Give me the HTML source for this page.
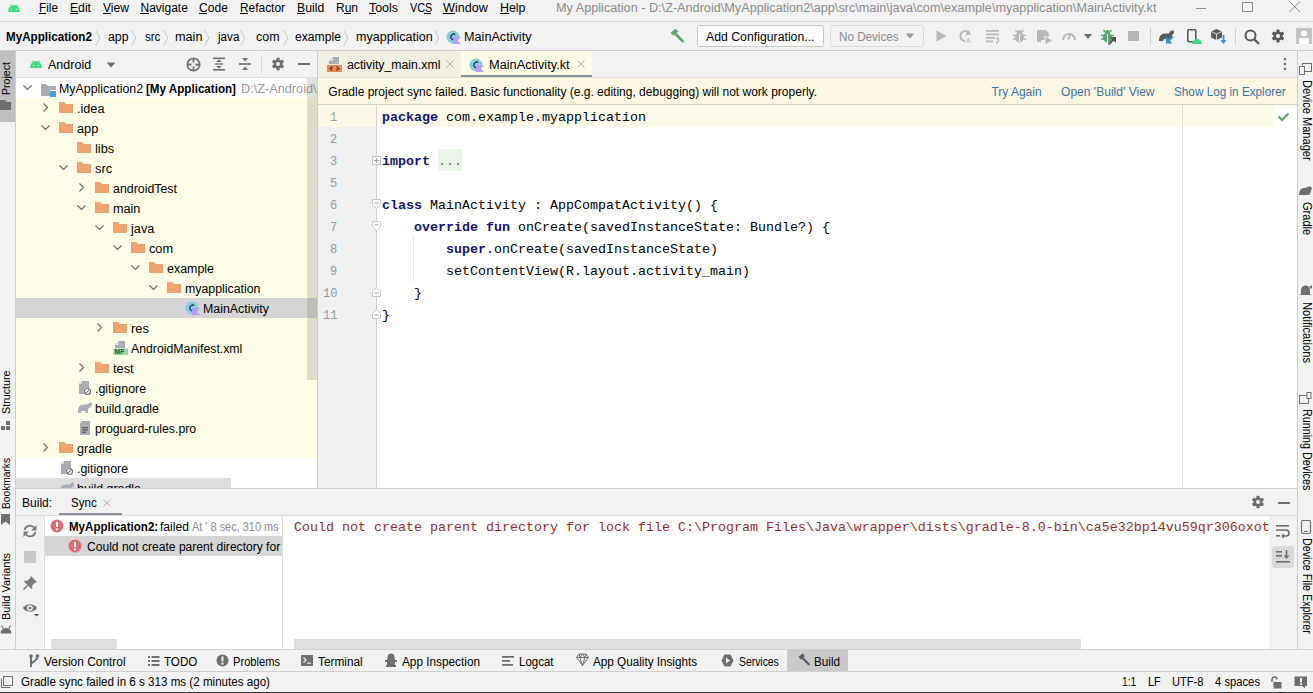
<!DOCTYPE html>
<html><head><meta charset="utf-8"><style>
html,body{margin:0;padding:0;}
body{width:1313px;height:693px;overflow:hidden;position:relative;background:#f2f2f2;}
body div,body svg{position:absolute;}
.t{white-space:pre;}
</style></head><body>
<div style="left:0px;top:0px;width:1313px;height:693px;background:#f2f2f2;"></div>
<div style="left:0px;top:21px;width:1313px;height:1px;background:#dadada;"></div>
<div style="left:0px;top:50px;width:1313px;height:1px;background:#cfcfcf;"></div>
<div style="left:15px;top:51px;width:1px;height:598px;background:#cdcdcd;"></div>
<div style="left:0px;top:51px;width:15px;height:71px;background:#bfbfbf;"></div>
<div style="left:16px;top:77px;width:301px;height:1px;background:#e2e2e2;"></div>
<div style="left:16px;top:78px;width:301px;height:410px;background:#ffffff;"></div>
<div style="left:16px;top:98px;width:301px;height:360px;background:#fefde6;"></div>
<div style="left:16px;top:298px;width:301px;height:20px;background:#d5d5d5;"></div>
<div style="left:16px;top:478px;width:215px;height:10px;background:#dedede;"></div>
<div style="left:317px;top:51px;width:1px;height:437px;background:#cdcdcd;"></div>
<div style="left:1297px;top:51px;width:1px;height:598px;background:#cdcdcd;"></div>
<div style="left:318px;top:51px;width:143px;height:26px;background:#f0efe1;"></div>
<div style="left:461px;top:51px;width:131px;height:26px;background:#fefde6;"></div>
<div style="left:461px;top:75px;width:131px;height:3px;background:#8c929c;"></div>
<div style="left:318px;top:77px;width:979px;height:1px;background:#e2e2e2;"></div>
<div style="left:318px;top:78px;width:979px;height:26px;background:#fef8e3;"></div>
<div style="left:318px;top:104px;width:979px;height:1px;background:#d6d3c4;"></div>
<div style="left:318px;top:105px;width:979px;height:383px;background:#ffffff;"></div>
<div style="left:318px;top:105px;width:58px;height:383px;background:#f0f0f0;"></div>
<div style="left:376px;top:105px;width:1px;height:383px;background:#d2d2d2;"></div>
<div style="left:318px;top:105px;width:58px;height:22px;background:#fdf9e7;"></div>
<div style="left:377px;top:105px;width:896px;height:22px;background:#fefae8;"></div>
<div style="left:1182px;top:105px;width:1px;height:383px;background:#e0e0e0;"></div>
<div style="left:16px;top:488px;width:1281px;height:1px;background:#d1d1d1;"></div>
<div style="left:16px;top:489px;width:1281px;height:27px;background:#f2f2f2;"></div>
<div style="left:59px;top:513px;width:63px;height:2.5px;background:#8c929c;"></div>
<div style="left:16px;top:515px;width:1281px;height:1px;background:#dcdcdc;"></div>
<div style="left:16px;top:516px;width:28px;height:133px;background:#f2f2f2;"></div>
<div style="left:44px;top:516px;width:1px;height:133px;background:#dcdcdc;"></div>
<div style="left:45px;top:516px;width:237px;height:133px;background:#ffffff;"></div>
<div style="left:45px;top:536px;width:237px;height:20px;background:#d5d5d5;"></div>
<div style="left:51px;top:639px;width:66px;height:10px;background:#dfdfdf;"></div>
<div style="left:282px;top:516px;width:1px;height:133px;background:#dcdcdc;"></div>
<div style="left:283px;top:516px;width:986px;height:133px;background:#ffffff;"></div>
<div style="left:294px;top:639px;width:787px;height:10px;background:#dfdfdf;"></div>
<div style="left:1269px;top:516px;width:28px;height:133px;background:#f2f2f2;"></div>
<div style="left:1272px;top:546px;width:22px;height:22px;background:#d9d9d9;border-radius:3px;"></div>
<div style="left:0px;top:649px;width:1313px;height:1px;background:#d0d0d0;"></div>
<div style="left:787px;top:650px;width:61px;height:21px;background:#c9c9c9;"></div>
<div style="left:0px;top:671px;width:1313px;height:1px;background:#d0d0d0;"></div>
<div style="left:0px;top:692px;width:1313px;height:1px;background:#3a3a3a;"></div>
<div class="t" style="left:39px;top:1.84px;font-size:12px;line-height:12px;font-family:'Liberation Sans', sans-serif;font-weight:400;color:#000;transform:scaleX(0.9822);transform-origin:0 0;">File</div>
<div style="left:39px;top:13px;width:7px;height:1px;background:#000;"></div>
<div class="t" style="left:70px;top:1.84px;font-size:12px;line-height:12px;font-family:'Liberation Sans', sans-serif;font-weight:400;color:#000;transform:scaleX(1.0151);transform-origin:0 0;">Edit</div>
<div style="left:70px;top:13px;width:8px;height:1px;background:#000;"></div>
<div class="t" style="left:103px;top:1.84px;font-size:12px;line-height:12px;font-family:'Liberation Sans', sans-serif;font-weight:400;color:#000;transform:scaleX(1.0079);transform-origin:0 0;">View</div>
<div style="left:103px;top:13px;width:8px;height:1px;background:#000;"></div>
<div class="t" style="left:140.5px;top:1.84px;font-size:12px;line-height:12px;font-family:'Liberation Sans', sans-serif;font-weight:400;color:#000;">Navigate</div>
<div style="left:140px;top:13px;width:9px;height:1px;background:#000;"></div>
<div class="t" style="left:199px;top:1.84px;font-size:12px;line-height:12px;font-family:'Liberation Sans', sans-serif;font-weight:400;color:#000;transform:scaleX(1.0109);transform-origin:0 0;">Code</div>
<div style="left:199px;top:13px;width:8px;height:1px;background:#000;"></div>
<div class="t" style="left:240px;top:1.84px;font-size:12px;line-height:12px;font-family:'Liberation Sans', sans-serif;font-weight:400;color:#000;transform:scaleX(0.9921);transform-origin:0 0;">Refactor</div>
<div style="left:240px;top:13px;width:8px;height:1px;background:#000;"></div>
<div class="t" style="left:297.3px;top:1.84px;font-size:12px;line-height:12px;font-family:'Liberation Sans', sans-serif;font-weight:400;color:#000;transform:scaleX(1.0192);transform-origin:0 0;">Build</div>
<div style="left:297px;top:13px;width:8px;height:1px;background:#000;"></div>
<div class="t" style="left:336px;top:1.84px;font-size:12px;line-height:12px;font-family:'Liberation Sans', sans-serif;font-weight:400;color:#000;">Run</div>
<div style="left:344px;top:13px;width:7px;height:1px;background:#000;"></div>
<div class="t" style="left:369px;top:1.84px;font-size:12px;line-height:12px;font-family:'Liberation Sans', sans-serif;font-weight:400;color:#000;transform:scaleX(1.0351);transform-origin:0 0;">Tools</div>
<div style="left:369px;top:13px;width:7px;height:1px;background:#000;"></div>
<div class="t" style="left:409.6px;top:1.84px;font-size:12px;line-height:12px;font-family:'Liberation Sans', sans-serif;font-weight:400;color:#000;transform:scaleX(0.9073);transform-origin:0 0;">VCS</div>
<div style="left:424px;top:13px;width:7px;height:1px;background:#000;"></div>
<div class="t" style="left:443px;top:1.84px;font-size:12px;line-height:12px;font-family:'Liberation Sans', sans-serif;font-weight:400;color:#000;transform:scaleX(1.0495);transform-origin:0 0;">Window</div>
<div style="left:443px;top:13px;width:12px;height:1px;background:#000;"></div>
<div class="t" style="left:500px;top:1.84px;font-size:12px;line-height:12px;font-family:'Liberation Sans', sans-serif;font-weight:400;color:#000;transform:scaleX(1.0329);transform-origin:0 0;">Help</div>
<div style="left:500px;top:13px;width:9px;height:1px;background:#000;"></div>
<div class="t" style="left:555.6px;top:1.84px;font-size:12px;line-height:12px;font-family:'Liberation Sans', sans-serif;font-weight:400;color:#8c8c8c;transform:scaleX(1.0558);transform-origin:0 0;">My Application - D:\Z-Android\MyApplication2\app\src\main\java\com\example\myapplication\MainActivity.kt</div>
<div class="t" style="left:6.4px;top:30.84px;font-size:12px;line-height:12px;font-family:'Liberation Sans', sans-serif;font-weight:700;color:#000;transform:scaleX(0.9686);transform-origin:0 0;">MyApplication2</div>
<div class="t" style="left:108px;top:30.84px;font-size:12px;line-height:12px;font-family:'Liberation Sans', sans-serif;font-weight:400;color:#000;transform:scaleX(1.0234);transform-origin:0 0;">app</div>
<div class="t" style="left:144.6px;top:30.84px;font-size:12px;line-height:12px;font-family:'Liberation Sans', sans-serif;font-weight:400;color:#000;transform:scaleX(0.9625);transform-origin:0 0;">src</div>
<div class="t" style="left:175px;top:30.84px;font-size:12px;line-height:12px;font-family:'Liberation Sans', sans-serif;font-weight:400;color:#000;transform:scaleX(1.0571);transform-origin:0 0;">main</div>
<div class="t" style="left:217.5px;top:30.84px;font-size:12px;line-height:12px;font-family:'Liberation Sans', sans-serif;font-weight:400;color:#000;transform:scaleX(0.9766);transform-origin:0 0;">java</div>
<div class="t" style="left:255.5px;top:30.84px;font-size:12px;line-height:12px;font-family:'Liberation Sans', sans-serif;font-weight:400;color:#000;transform:scaleX(1.0365);transform-origin:0 0;">com</div>
<div class="t" style="left:295px;top:30.84px;font-size:12px;line-height:12px;font-family:'Liberation Sans', sans-serif;font-weight:400;color:#000;transform:scaleX(1.0141);transform-origin:0 0;">example</div>
<div class="t" style="left:356px;top:30.84px;font-size:12px;line-height:12px;font-family:'Liberation Sans', sans-serif;font-weight:400;color:#000;transform:scaleX(1.0440);transform-origin:0 0;">myapplication</div>
<div class="t" style="left:464px;top:30.84px;font-size:12px;line-height:12px;font-family:'Liberation Sans', sans-serif;font-weight:400;color:#000;transform:scaleX(1.0544);transform-origin:0 0;">MainActivity</div>
<div class="t" style="left:48.2px;top:58.84px;font-size:12px;line-height:12px;font-family:'Liberation Sans', sans-serif;font-weight:400;color:#000;transform:scaleX(1.0441);transform-origin:0 0;">Android</div>
<div style="left:16px;top:78px;width:301px;height:410px;overflow:hidden;">
<svg style="left:6.0px;top:4.0px;" width="11" height="11" viewBox="0 0 11 11"><path d="M1.5 3.5 L5.5 7.5 L9.5 3.5" fill="none" stroke="#6e6e6e" stroke-width="1.2"/></svg>
<svg style="left:25px;top:4px;" width="17" height="16" viewBox="0 0 17 16"><path d="M0 2 H5 L7 4 H15 V8 H9 V14 H0 Z" fill="#a8adb3"/><rect x="9" y="9" width="6" height="6" fill="#3ea4dc"/></svg>
<div class="t" style="left:42.9px;top:4.84px;font-size:12px;line-height:12px;font-family:'Liberation Sans', sans-serif;font-weight:400;color:#000;transform:scaleX(1.0335);transform-origin:0 0;">MyApplication2</div>
<div class="t" style="left:130px;top:4.84px;font-size:12px;line-height:12px;font-family:'Liberation Sans', sans-serif;font-weight:700;color:#000;transform:scaleX(0.9689);transform-origin:0 0;">[My Application]</div>
<div class="t" style="left:225.2px;top:4.84px;font-size:12px;line-height:12px;font-family:'Liberation Sans', sans-serif;font-weight:400;color:#999999;transform:scaleX(1.0594);transform-origin:0 0;">D:\Z-Android\MyApplication2</div>
<svg style="left:24.0px;top:24.0px;" width="11" height="11" viewBox="0 0 11 11"><path d="M3.5 1.5 L7.5 5.5 L3.5 9.5" fill="none" stroke="#6e6e6e" stroke-width="1.2"/></svg>
<svg style="left:41.900000000000006px;top:22px;" width="16" height="16" viewBox="0 0 16 16"><path d="M1 2 H6 L8 4 H15 V13 H1 Z" fill="#f0a36e"/></svg>
<div class="t" style="left:60.900000000000006px;top:24.84px;font-size:12px;line-height:12px;font-family:'Liberation Sans', sans-serif;font-weight:400;color:#000;transform:scaleX(1.0534);transform-origin:0 0;">.idea</div>
<svg style="left:24.0px;top:44.0px;" width="11" height="11" viewBox="0 0 11 11"><path d="M1.5 3.5 L5.5 7.5 L9.5 3.5" fill="none" stroke="#6e6e6e" stroke-width="1.2"/></svg>
<svg style="left:41.900000000000006px;top:42px;" width="16" height="16" viewBox="0 0 16 16"><path d="M1 2 H6 L8 4 H15 V13 H1 Z" fill="#f0a36e"/></svg>
<div class="t" style="left:60.900000000000006px;top:44.84px;font-size:12px;line-height:12px;font-family:'Liberation Sans', sans-serif;font-weight:400;color:#000;transform:scaleX(1.0649);transform-origin:0 0;">app</div>
<svg style="left:59.900000000000006px;top:62px;" width="16" height="16" viewBox="0 0 16 16"><path d="M1 2 H6 L8 4 H15 V13 H1 Z" fill="#f0a36e"/></svg>
<div class="t" style="left:78.9px;top:64.84px;font-size:12px;line-height:12px;font-family:'Liberation Sans', sans-serif;font-weight:400;color:#000;transform:scaleX(1.0705);transform-origin:0 0;">libs</div>
<svg style="left:42.0px;top:84.0px;" width="11" height="11" viewBox="0 0 11 11"><path d="M1.5 3.5 L5.5 7.5 L9.5 3.5" fill="none" stroke="#6e6e6e" stroke-width="1.2"/></svg>
<svg style="left:59.900000000000006px;top:82px;" width="16" height="16" viewBox="0 0 16 16"><path d="M1 2 H6 L8 4 H15 V13 H1 Z" fill="#f0a36e"/></svg>
<div class="t" style="left:78.9px;top:84.84px;font-size:12px;line-height:12px;font-family:'Liberation Sans', sans-serif;font-weight:400;color:#000;transform:scaleX(1.0775);transform-origin:0 0;">src</div>
<svg style="left:60.0px;top:104.0px;" width="11" height="11" viewBox="0 0 11 11"><path d="M3.5 1.5 L7.5 5.5 L3.5 9.5" fill="none" stroke="#6e6e6e" stroke-width="1.2"/></svg>
<svg style="left:77.9px;top:102px;" width="16" height="16" viewBox="0 0 16 16"><path d="M1 2 H6 L8 4 H15 V13 H1 Z" fill="#f0a36e"/></svg>
<div class="t" style="left:96.9px;top:104.84px;font-size:12px;line-height:12px;font-family:'Liberation Sans', sans-serif;font-weight:400;color:#000;transform:scaleX(1.0311);transform-origin:0 0;">androidTest</div>
<svg style="left:60.0px;top:124.0px;" width="11" height="11" viewBox="0 0 11 11"><path d="M1.5 3.5 L5.5 7.5 L9.5 3.5" fill="none" stroke="#6e6e6e" stroke-width="1.2"/></svg>
<svg style="left:77.9px;top:122px;" width="16" height="16" viewBox="0 0 16 16"><path d="M1 2 H6 L8 4 H15 V13 H1 Z" fill="#f0a36e"/></svg>
<div class="t" style="left:96.9px;top:124.84px;font-size:12px;line-height:12px;font-family:'Liberation Sans', sans-serif;font-weight:400;color:#000;transform:scaleX(1.0534);transform-origin:0 0;">main</div>
<svg style="left:78.0px;top:144.0px;" width="11" height="11" viewBox="0 0 11 11"><path d="M1.5 3.5 L5.5 7.5 L9.5 3.5" fill="none" stroke="#6e6e6e" stroke-width="1.2"/></svg>
<svg style="left:95.9px;top:142px;" width="16" height="16" viewBox="0 0 16 16"><path d="M1 2 H6 L8 4 H15 V13 H1 Z" fill="#f0a36e"/></svg>
<div class="t" style="left:114.9px;top:144.84px;font-size:12px;line-height:12px;font-family:'Liberation Sans', sans-serif;font-weight:400;color:#000;transform:scaleX(1.0604);transform-origin:0 0;">java</div>
<svg style="left:96.0px;top:164.0px;" width="11" height="11" viewBox="0 0 11 11"><path d="M1.5 3.5 L5.5 7.5 L9.5 3.5" fill="none" stroke="#6e6e6e" stroke-width="1.2"/></svg>
<svg style="left:113.9px;top:162px;" width="16" height="16" viewBox="0 0 16 16"><path d="M1 2 H6 L8 4 H15 V13 H1 Z" fill="#f0a36e"/></svg>
<div class="t" style="left:132.9px;top:164.84px;font-size:12px;line-height:12px;font-family:'Liberation Sans', sans-serif;font-weight:400;color:#000;transform:scaleX(1.0591);transform-origin:0 0;">com</div>
<svg style="left:114.0px;top:184.0px;" width="11" height="11" viewBox="0 0 11 11"><path d="M1.5 3.5 L5.5 7.5 L9.5 3.5" fill="none" stroke="#6e6e6e" stroke-width="1.2"/></svg>
<svg style="left:131.9px;top:182px;" width="16" height="16" viewBox="0 0 16 16"><path d="M1 2 H6 L8 4 H15 V13 H1 Z" fill="#f0a36e"/></svg>
<div class="t" style="left:150.9px;top:184.84px;font-size:12px;line-height:12px;font-family:'Liberation Sans', sans-serif;font-weight:400;color:#000;transform:scaleX(1.0370);transform-origin:0 0;">example</div>
<svg style="left:132.0px;top:204.0px;" width="11" height="11" viewBox="0 0 11 11"><path d="M1.5 3.5 L5.5 7.5 L9.5 3.5" fill="none" stroke="#6e6e6e" stroke-width="1.2"/></svg>
<svg style="left:149.9px;top:202px;" width="16" height="16" viewBox="0 0 16 16"><path d="M1 2 H6 L8 4 H15 V13 H1 Z" fill="#f0a36e"/></svg>
<div class="t" style="left:168.9px;top:204.84px;font-size:12px;line-height:12px;font-family:'Liberation Sans', sans-serif;font-weight:400;color:#000;transform:scaleX(1.0286);transform-origin:0 0;">myapplication</div>
<svg style="left:168.6px;top:222px;" width="16" height="16" viewBox="0 0 16 16"><circle cx="7" cy="8" r="6.5" fill="#86cde0"/><path d="M9.2 5.3 A3 3 0 1 0 9.2 10.7" fill="none" stroke="#234" stroke-width="1.3"/><path d="M7 8 H15 L11.5 11.5 L15 15 H7 Z" fill="#b99bf8"/></svg>
<div class="t" style="left:186.9px;top:224.84px;font-size:12px;line-height:12px;font-family:'Liberation Sans', sans-serif;font-weight:400;color:#000;transform:scaleX(1.0306);transform-origin:0 0;">MainActivity</div>
<svg style="left:78.0px;top:244.0px;" width="11" height="11" viewBox="0 0 11 11"><path d="M3.5 1.5 L7.5 5.5 L3.5 9.5" fill="none" stroke="#6e6e6e" stroke-width="1.2"/></svg>
<svg style="left:95.9px;top:242px;" width="16" height="16" viewBox="0 0 16 16"><path d="M1 2 H6 L8 4 H15 V13 H1 Z" fill="#f0a36e"/></svg>
<div class="t" style="left:114.9px;top:244.84px;font-size:12px;line-height:12px;font-family:'Liberation Sans', sans-serif;font-weight:400;color:#000;transform:scaleX(1.0750);transform-origin:0 0;">res</div>
<svg style="left:96.60000000000001px;top:262px;" width="16" height="16" viewBox="0 0 16 16"><path d="M6 1 H12 V8 H2 V5 Z" fill="#a8adb3"/><path d="M6 1 V5 H2 Z" fill="#d8dadd"/><rect x="0.5" y="8.5" width="14.5" height="6.5" fill="#8fdba8"/><text x="1.6" y="14.3" font-family="Liberation Sans" font-size="6.8" font-weight="700" fill="#1f5a30">MF</text></svg>
<div class="t" style="left:114.9px;top:264.84px;font-size:12px;line-height:12px;font-family:'Liberation Sans', sans-serif;font-weight:400;color:#000;transform:scaleX(1.0242);transform-origin:0 0;">AndroidManifest.xml</div>
<svg style="left:60.0px;top:284.0px;" width="11" height="11" viewBox="0 0 11 11"><path d="M3.5 1.5 L7.5 5.5 L3.5 9.5" fill="none" stroke="#6e6e6e" stroke-width="1.2"/></svg>
<svg style="left:77.9px;top:282px;" width="16" height="16" viewBox="0 0 16 16"><path d="M1 2 H6 L8 4 H15 V13 H1 Z" fill="#f0a36e"/></svg>
<div class="t" style="left:96.9px;top:284.84px;font-size:12px;line-height:12px;font-family:'Liberation Sans', sans-serif;font-weight:400;color:#000;transform:scaleX(1.0667);transform-origin:0 0;">test</div>
<svg style="left:60.60000000000001px;top:302px;" width="16" height="16" viewBox="0 0 16 16"><path d="M5 1 H12 V14 H2 V4 Z" fill="#a8adb3"/><path d="M5 1 V4 H2 Z" fill="#d8dadd"/><circle cx="10.5" cy="11.5" r="3.8" fill="#fff"/><circle cx="10.5" cy="11.5" r="3" fill="none" stroke="#6e6e6e" stroke-width="1.1"/><path d="M8.4 13.6 L12.6 9.4" stroke="#6e6e6e" stroke-width="1.1"/></svg>
<div class="t" style="left:78.9px;top:304.84px;font-size:12px;line-height:12px;font-family:'Liberation Sans', sans-serif;font-weight:400;color:#000;transform:scaleX(1.0353);transform-origin:0 0;">.gitignore</div>
<svg style="left:60.60000000000001px;top:322px;" width="17" height="16" viewBox="0 0 17 16"><path d="M1 13 L1.2 8.5 C1.8 5.8 4 4.6 7 4.6 L10 4.6 C11 4.4 11.8 3 13 2.5 C14.6 2 15.4 3.4 14.8 5 C14.2 6.8 12.6 8 11.2 8.6 L10.8 13 H8.8 L8.4 11 H4.6 L4 13 Z" fill="#a9aeb3"/></svg>
<div class="t" style="left:78.9px;top:324.84px;font-size:12px;line-height:12px;font-family:'Liberation Sans', sans-serif;font-weight:400;color:#000;transform:scaleX(1.0311);transform-origin:0 0;">build.gradle</div>
<svg style="left:60.60000000000001px;top:342px;" width="16" height="16" viewBox="0 0 16 16"><path d="M5 1 H13 V15 H3 V3 Z" fill="#a8adb3"/><path d="M5 1 V3 H3 Z" fill="#d8dadd"/><rect x="5" y="7" width="6" height="1.2" fill="#555"/><rect x="5" y="9.3" width="6" height="1.2" fill="#555"/><rect x="5" y="11.6" width="4" height="1.2" fill="#555"/></svg>
<div class="t" style="left:78.9px;top:344.84px;font-size:12px;line-height:12px;font-family:'Liberation Sans', sans-serif;font-weight:400;color:#000;transform:scaleX(1.0251);transform-origin:0 0;">proguard-rules.pro</div>
<svg style="left:24.0px;top:364.0px;" width="11" height="11" viewBox="0 0 11 11"><path d="M3.5 1.5 L7.5 5.5 L3.5 9.5" fill="none" stroke="#6e6e6e" stroke-width="1.2"/></svg>
<svg style="left:41.900000000000006px;top:362px;" width="16" height="16" viewBox="0 0 16 16"><path d="M1 2 H6 L8 4 H15 V13 H1 Z" fill="#f0a36e"/></svg>
<div class="t" style="left:60.900000000000006px;top:364.84px;font-size:12px;line-height:12px;font-family:'Liberation Sans', sans-serif;font-weight:400;color:#000;transform:scaleX(1.0450);transform-origin:0 0;">gradle</div>
<svg style="left:42.60000000000001px;top:382px;" width="16" height="16" viewBox="0 0 16 16"><path d="M5 1 H12 V14 H2 V4 Z" fill="#a8adb3"/><path d="M5 1 V4 H2 Z" fill="#d8dadd"/><circle cx="10.5" cy="11.5" r="3.8" fill="#fff"/><circle cx="10.5" cy="11.5" r="3" fill="none" stroke="#6e6e6e" stroke-width="1.1"/><path d="M8.4 13.6 L12.6 9.4" stroke="#6e6e6e" stroke-width="1.1"/></svg>
<div class="t" style="left:60.900000000000006px;top:384.84px;font-size:12px;line-height:12px;font-family:'Liberation Sans', sans-serif;font-weight:400;color:#000;transform:scaleX(1.0353);transform-origin:0 0;">.gitignore</div>
<svg style="left:42.60000000000001px;top:402px;" width="17" height="16" viewBox="0 0 17 16"><path d="M1 13 L1.2 8.5 C1.8 5.8 4 4.6 7 4.6 L10 4.6 C11 4.4 11.8 3 13 2.5 C14.6 2 15.4 3.4 14.8 5 C14.2 6.8 12.6 8 11.2 8.6 L10.8 13 H8.8 L8.4 11 H4.6 L4 13 Z" fill="#a9aeb3"/></svg>
<div class="t" style="left:60.900000000000006px;top:404.84px;font-size:12px;line-height:12px;font-family:'Liberation Sans', sans-serif;font-weight:400;color:#000;transform:scaleX(1.0311);transform-origin:0 0;">build.gradle</div>
</div>
<div style="left:307px;top:78px;width:10px;height:302px;background:rgba(120,120,100,0.24);"></div>
<svg style="left:327px;top:57px;" width="16" height="16" viewBox="0 0 16 16"><path d="M6 0 H12 V7 H2 V4 Z" fill="#a8adb3"/><path d="M6 0 V4 H2 Z" fill="#dcdee0"/><rect x="0" y="8" width="15" height="7" fill="#e8885a"/><path d="M5.5 9.5 L3.2 11.5 L5.5 13.5 M9.5 9.5 L11.8 11.5 L9.5 13.5" fill="none" stroke="#5a2e1e" stroke-width="1.1"/></svg>
<div class="t" style="left:346.6px;top:58.84px;font-size:12px;line-height:12px;font-family:'Liberation Sans', sans-serif;font-weight:400;color:#000;transform:scaleX(1.0223);transform-origin:0 0;">activity_main.xml</div>
<svg style="left:446px;top:60px;" width="8" height="8" viewBox="0 0 8 8"><path d="M0.5 0.5 L7.5 7.5 M7.5 0.5 L0.5 7.5" stroke="#b0b0b0" stroke-width="1"/></svg>
<svg style="left:469px;top:57px;" width="16" height="16" viewBox="0 0 16 16"><circle cx="7" cy="8" r="6.5" fill="#86cde0"/><path d="M9.2 5.3 A3 3 0 1 0 9.2 10.7" fill="none" stroke="#234" stroke-width="1.3"/><path d="M7 8 H15 L11.5 11.5 L15 15 H7 Z" fill="#b99bf8"/></svg>
<div class="t" style="left:489.4px;top:58.84px;font-size:12px;line-height:12px;font-family:'Liberation Sans', sans-serif;font-weight:400;color:#000;transform:scaleX(1.0634);transform-origin:0 0;">MainActivity.kt</div>
<svg style="left:577px;top:60px;" width="8" height="8" viewBox="0 0 8 8"><path d="M0.5 0.5 L7.5 7.5 M7.5 0.5 L0.5 7.5" stroke="#b0b0b0" stroke-width="1"/></svg>
<svg style="left:1282px;top:57px;" width="6" height="14" viewBox="0 0 6 14"><circle cx="3" cy="2" r="1.3" fill="#6e6e6e"/><circle cx="3" cy="7" r="1.3" fill="#6e6e6e"/><circle cx="3" cy="12" r="1.3" fill="#6e6e6e"/></svg>
<div class="t" style="left:328.3px;top:85.84px;font-size:12px;line-height:12px;font-family:'Liberation Sans', sans-serif;font-weight:400;color:#000;">Gradle project sync failed. Basic functionality (e.g. editing, debugging) will not work properly.</div>
<div class="t" style="left:991.4px;top:85.84px;font-size:12px;line-height:12px;font-family:'Liberation Sans', sans-serif;font-weight:400;color:#3d72a6;">Try Again</div>
<div class="t" style="left:1061.4px;top:85.84px;font-size:12px;line-height:12px;font-family:'Liberation Sans', sans-serif;font-weight:400;color:#3d72a6;transform:scaleX(1.0054);transform-origin:0 0;">Open 'Build' View</div>
<div class="t" style="left:1174px;top:85.84px;font-size:12px;line-height:12px;font-family:'Liberation Sans', sans-serif;font-weight:400;color:#3d72a6;transform:scaleX(0.9783);transform-origin:0 0;">Show Log in Explorer</div>
<div class="t" style="left:330px;top:111.80px;font-size:12px;line-height:12px;font-family:'Liberation Mono', monospace;font-weight:400;color:#999999;">1</div>
<div class="t" style="left:330px;top:133.80px;font-size:12px;line-height:12px;font-family:'Liberation Mono', monospace;font-weight:400;color:#999999;">2</div>
<div class="t" style="left:330px;top:155.80px;font-size:12px;line-height:12px;font-family:'Liberation Mono', monospace;font-weight:400;color:#999999;">3</div>
<div class="t" style="left:330px;top:177.80px;font-size:12px;line-height:12px;font-family:'Liberation Mono', monospace;font-weight:400;color:#999999;">5</div>
<div class="t" style="left:330px;top:199.80px;font-size:12px;line-height:12px;font-family:'Liberation Mono', monospace;font-weight:400;color:#999999;">6</div>
<div class="t" style="left:330px;top:221.80px;font-size:12px;line-height:12px;font-family:'Liberation Mono', monospace;font-weight:400;color:#999999;">7</div>
<div class="t" style="left:330px;top:243.80px;font-size:12px;line-height:12px;font-family:'Liberation Mono', monospace;font-weight:400;color:#999999;">8</div>
<div class="t" style="left:330px;top:265.80px;font-size:12px;line-height:12px;font-family:'Liberation Mono', monospace;font-weight:400;color:#999999;">9</div>
<div class="t" style="left:323px;top:287.80px;font-size:12px;line-height:12px;font-family:'Liberation Mono', monospace;font-weight:400;color:#999999;">10</div>
<div class="t" style="left:323px;top:309.80px;font-size:12px;line-height:12px;font-family:'Liberation Mono', monospace;font-weight:400;color:#999999;">11</div>
<div class="t" style="left:382px;top:110.78px;font-size:13.33px;line-height:13.33px;font-family:'Liberation Mono', monospace;font-weight:700;color:#14146e;">package</div>
<div class="t" style="left:438px;top:110.78px;font-size:13.33px;line-height:13.33px;font-family:'Liberation Mono', monospace;font-weight:400;color:#000;"> com.example.myapplication</div>
<div class="t" style="left:382px;top:154.78px;font-size:13.33px;line-height:13.33px;font-family:'Liberation Mono', monospace;font-weight:700;color:#14146e;">import</div>
<div class="t" style="left:430px;top:154.78px;font-size:13.33px;line-height:13.33px;font-family:'Liberation Mono', monospace;font-weight:400;color:#000;"> </div>
<div style="left:438px;top:149px;width:24px;height:22px;background:#e9f5e6;"></div>
<div class="t" style="left:438px;top:154.78px;font-size:13.33px;line-height:13.33px;font-family:'Liberation Mono', monospace;font-weight:400;color:#707070;">...</div>
<div class="t" style="left:382px;top:198.78px;font-size:13.33px;line-height:13.33px;font-family:'Liberation Mono', monospace;font-weight:700;color:#14146e;">class</div>
<div class="t" style="left:422px;top:198.78px;font-size:13.33px;line-height:13.33px;font-family:'Liberation Mono', monospace;font-weight:400;color:#000;"> MainActivity : AppCompatActivity() {</div>
<div class="t" style="left:414px;top:220.78px;font-size:13.33px;line-height:13.33px;font-family:'Liberation Mono', monospace;font-weight:700;color:#14146e;">override</div>
<div class="t" style="left:478px;top:220.78px;font-size:13.33px;line-height:13.33px;font-family:'Liberation Mono', monospace;font-weight:400;color:#000;"> </div>
<div class="t" style="left:486px;top:220.78px;font-size:13.33px;line-height:13.33px;font-family:'Liberation Mono', monospace;font-weight:700;color:#14146e;">fun</div>
<div class="t" style="left:510px;top:220.78px;font-size:13.33px;line-height:13.33px;font-family:'Liberation Mono', monospace;font-weight:400;color:#000;"> onCreate(savedInstanceState: Bundle?) {</div>
<div class="t" style="left:446px;top:242.78px;font-size:13.33px;line-height:13.33px;font-family:'Liberation Mono', monospace;font-weight:700;color:#14146e;">super</div>
<div class="t" style="left:486px;top:242.78px;font-size:13.33px;line-height:13.33px;font-family:'Liberation Mono', monospace;font-weight:400;color:#000;">.onCreate(savedInstanceState)</div>
<div class="t" style="left:446px;top:264.78px;font-size:13.33px;line-height:13.33px;font-family:'Liberation Mono', monospace;font-weight:400;color:#000;">setContentView(R.layout.activity_main)</div>
<div class="t" style="left:414px;top:286.78px;font-size:13.33px;line-height:13.33px;font-family:'Liberation Mono', monospace;font-weight:400;color:#000;">}</div>
<div class="t" style="left:382px;top:308.78px;font-size:13.33px;line-height:13.33px;font-family:'Liberation Mono', monospace;font-weight:400;color:#000;">}</div>
<div style="left:413px;top:237px;width:1px;height:44px;background:#e3e3e3;"></div>
<svg style="left:372px;top:155.5px;" width="9" height="9" viewBox="0 0 9 9"><rect x="0.5" y="0.5" width="8" height="8" fill="#fff" stroke="#c8c8c8"/><path d="M2 4.5 H7 M4.5 2 V7" stroke="#a0a0a0"/></svg>
<svg style="left:372px;top:199px;" width="9" height="10" viewBox="0 0 9 10"><path d="M0.5 0.5 H8.5 V5.5 L4.5 9.5 L0.5 5.5 Z" fill="#fff" stroke="#c8c8c8"/><path d="M2.5 4 H6.5" stroke="#a0a0a0"/></svg>
<svg style="left:372px;top:221px;" width="9" height="10" viewBox="0 0 9 10"><path d="M0.5 0.5 H8.5 V5.5 L4.5 9.5 L0.5 5.5 Z" fill="#fff" stroke="#c8c8c8"/><path d="M2.5 4 H6.5" stroke="#a0a0a0"/></svg>
<svg style="left:372px;top:287px;" width="9" height="10" viewBox="0 0 9 10"><path d="M0.5 9.5 H8.5 V4.5 L4.5 0.5 L0.5 4.5 Z" fill="#fff" stroke="#c8c8c8"/><path d="M2.5 6 H6.5" stroke="#a0a0a0"/></svg>
<svg style="left:372px;top:309px;" width="9" height="10" viewBox="0 0 9 10"><path d="M0.5 9.5 H8.5 V4.5 L4.5 0.5 L0.5 4.5 Z" fill="#fff" stroke="#c8c8c8"/><path d="M2.5 6 H6.5" stroke="#a0a0a0"/></svg>
<svg style="left:1277px;top:111px;" width="13" height="11" viewBox="0 0 13 11"><path d="M1.5 5.5 L5 9 L11.5 2.5" fill="none" stroke="#59a869" stroke-width="2.2"/></svg>
<div class="t" style="left:22.3px;top:496.84px;font-size:12px;line-height:12px;font-family:'Liberation Sans', sans-serif;font-weight:400;color:#000;transform:scaleX(1.0056);transform-origin:0 0;">Build:</div>
<div class="t" style="left:71px;top:496.84px;font-size:12px;line-height:12px;font-family:'Liberation Sans', sans-serif;font-weight:400;color:#000;transform:scaleX(0.9630);transform-origin:0 0;">Sync</div>
<svg style="left:103px;top:499px;" width="8" height="8" viewBox="0 0 8 8"><path d="M0.5 0.5 L7.5 7.5 M7.5 0.5 L0.5 7.5" stroke="#b0b0b0" stroke-width="1"/></svg>
<svg style="left:1248px;top:494px;" width="20" height="20" viewBox="0 0 20 20"><rect x="8.40" y="1.80" width="3.2" height="12.40" rx="0.6" fill="#6e6e6e" transform="rotate(0 10 8)"/><rect x="8.40" y="1.80" width="3.2" height="12.40" rx="0.6" fill="#6e6e6e" transform="rotate(60 10 8)"/><rect x="8.40" y="1.80" width="3.2" height="12.40" rx="0.6" fill="#6e6e6e" transform="rotate(120 10 8)"/><circle cx="10" cy="8" r="4.46" fill="#6e6e6e"/><circle cx="10" cy="8" r="2.05" fill="#f2f2f2"/></svg>
<div style="left:1278px;top:502px;width:12px;height:1.5px;background:#6e6e6e;"></div>
<svg style="left:22px;top:523px;" width="16" height="16" viewBox="0 0 16 16"><path d="M2.5 7 A5.5 5.5 0 0 1 12 4.5" fill="none" stroke="#7a7a7a" stroke-width="1.8"/><path d="M13.5 9 A5.5 5.5 0 0 1 4 11.5" fill="none" stroke="#7a7a7a" stroke-width="1.8"/><path d="M14.5 2 V7.5 H9 Z" fill="#7a7a7a"/><path d="M1.5 14 V8.5 H7 Z" fill="#7a7a7a"/></svg>
<div style="left:24px;top:551px;width:12px;height:12px;background:#c9c9c9;"></div>
<svg style="left:22px;top:575px;" width="16" height="16" viewBox="0 0 16 16"><path d="M9 1 L15 7 L12.5 8 L10 11 L10.5 13 L9.5 14 L2 6.5 L3 5.5 L5 6 L8 3.5 Z" fill="#7a7a7a"/><path d="M5.5 10.5 L1.5 14.5" stroke="#7a7a7a" stroke-width="1.6"/></svg>
<svg style="left:22px;top:601px;" width="18" height="16" viewBox="0 0 18 16"><path d="M1 7 C4 2 12 2 15 7 C12 12 4 12 1 7 Z" fill="#7a7a7a"/><circle cx="8" cy="7" r="2.8" fill="#fff"/><circle cx="8" cy="7" r="1.6" fill="#7a7a7a"/><path d="M12 13 H17 L14.5 15.5 Z" fill="#505050"/></svg>
<svg style="left:49.5px;top:519px;" width="14" height="14" viewBox="0 0 14 14"><circle cx="7" cy="7" r="6.5" fill="#e06c75"/><rect x="6" y="3" width="2" height="5" fill="#fff"/><rect x="6" y="9.3" width="2" height="2" fill="#fff"/></svg>
<div class="t" style="left:68.5px;top:520.84px;font-size:12px;line-height:12px;font-family:'Liberation Sans', sans-serif;font-weight:700;color:#000;transform:scaleX(0.9625);transform-origin:0 0;">MyApplication2:</div>
<div class="t" style="left:160px;top:520.84px;font-size:12px;line-height:12px;font-family:'Liberation Sans', sans-serif;font-weight:400;color:#000;transform:scaleX(1.0109);transform-origin:0 0;">failed</div>
<div class="t" style="left:192px;top:520.84px;font-size:12px;line-height:12px;font-family:'Liberation Sans', sans-serif;font-weight:400;color:#8c8c8c;transform:scaleX(0.9116);transform-origin:0 0;">At ' 8 sec, 310 ms</div>
<svg style="left:68px;top:539px;" width="14" height="14" viewBox="0 0 14 14"><circle cx="7" cy="7" r="6.5" fill="#e06c75"/><rect x="6" y="3" width="2" height="5" fill="#fff"/><rect x="6" y="9.3" width="2" height="2" fill="#fff"/></svg>
<div class="t" style="left:86.5px;top:540.84px;font-size:12px;line-height:12px;font-family:'Liberation Sans', sans-serif;font-weight:400;color:#000;transform:scaleX(1.0057);transform-origin:0 0;">Could not create parent directory for</div>
<div class="t" style="left:294px;top:520.78px;font-size:13.33px;line-height:13.33px;font-family:'Liberation Mono', monospace;font-weight:400;color:#8f2e2e;">Could not create parent directory for lock file C:\Program Files\Java\wrapper\dists\gradle-8.0-bin\ca5e32bp14vu59qr306oxot</div>
<svg style="left:1275px;top:523px;" width="16" height="16" viewBox="0 0 16 16"><rect x="1" y="2" width="13" height="1.6" fill="#6e6e6e"/><path d="M1 7 H11 A3 3 0 0 1 11 13 H8" fill="none" stroke="#6e6e6e" stroke-width="1.6"/><path d="M9 10.5 L6 13 L9 15.5 Z" fill="#6e6e6e"/><rect x="1" y="12" width="4" height="1.6" fill="#6e6e6e"/></svg>
<svg style="left:1275px;top:549px;" width="16" height="16" viewBox="0 0 16 16"><rect x="1" y="2" width="6" height="1.6" fill="#6e6e6e"/><rect x="1" y="6" width="6" height="1.6" fill="#6e6e6e"/><rect x="1" y="12" width="14" height="1.6" fill="#6e6e6e"/><path d="M11.5 1 V8" stroke="#6e6e6e" stroke-width="1.6"/><path d="M8.5 6.5 L11.5 10 L14.5 6.5 Z" fill="#6e6e6e"/></svg>
<div class="t" style="left:44px;top:655.84px;font-size:12px;line-height:12px;font-family:'Liberation Sans', sans-serif;font-weight:400;color:#000;transform:scaleX(0.9946);transform-origin:0 0;">Version Control</div>
<div class="t" style="left:163.7px;top:655.84px;font-size:12px;line-height:12px;font-family:'Liberation Sans', sans-serif;font-weight:400;color:#000;transform:scaleX(0.9665);transform-origin:0 0;">TODO</div>
<div class="t" style="left:233px;top:655.84px;font-size:12px;line-height:12px;font-family:'Liberation Sans', sans-serif;font-weight:400;color:#000;transform:scaleX(0.9273);transform-origin:0 0;">Problems</div>
<div class="t" style="left:318px;top:655.84px;font-size:12px;line-height:12px;font-family:'Liberation Sans', sans-serif;font-weight:400;color:#000;transform:scaleX(0.9855);transform-origin:0 0;">Terminal</div>
<div class="t" style="left:402px;top:655.84px;font-size:12px;line-height:12px;font-family:'Liberation Sans', sans-serif;font-weight:400;color:#000;transform:scaleX(0.9825);transform-origin:0 0;">App Inspection</div>
<div class="t" style="left:519px;top:655.84px;font-size:12px;line-height:12px;font-family:'Liberation Sans', sans-serif;font-weight:400;color:#000;transform:scaleX(0.9575);transform-origin:0 0;">Logcat</div>
<div class="t" style="left:593.4px;top:655.84px;font-size:12px;line-height:12px;font-family:'Liberation Sans', sans-serif;font-weight:400;color:#000;transform:scaleX(0.9753);transform-origin:0 0;">App Quality Insights</div>
<div class="t" style="left:738.5px;top:655.84px;font-size:12px;line-height:12px;font-family:'Liberation Sans', sans-serif;font-weight:400;color:#000;transform:scaleX(0.8649);transform-origin:0 0;">Services</div>
<div class="t" style="left:814px;top:655.84px;font-size:12px;line-height:12px;font-family:'Liberation Sans', sans-serif;font-weight:400;color:#000;transform:scaleX(0.9742);transform-origin:0 0;">Build</div>
<svg style="left:28px;top:653px;" width="12" height="16" viewBox="0 0 12 16"><circle cx="3" cy="3" r="1.8" fill="#6e6e6e"/><circle cx="9.5" cy="3" r="1.8" fill="#6e6e6e"/><path d="M3 3 V14 M9.5 3 C9.5 9 3 8 3 12" fill="none" stroke="#6e6e6e" stroke-width="2"/></svg>
<svg style="left:148px;top:655px;" width="12" height="12" viewBox="0 0 12 12"><rect x="0" y="1" width="2" height="2" fill="#6e6e6e"/><rect x="3.5" y="1" width="8" height="2" fill="#6e6e6e"/><rect x="0" y="5" width="2" height="2" fill="#6e6e6e"/><rect x="3.5" y="5" width="8" height="2" fill="#6e6e6e"/><rect x="0" y="9" width="2" height="2" fill="#6e6e6e"/><rect x="3.5" y="9" width="8" height="2" fill="#6e6e6e"/></svg>
<svg style="left:216px;top:654px;" width="13" height="13" viewBox="0 0 13 13"><circle cx="6.5" cy="6.5" r="6" fill="#6e6e6e"/><rect x="5.5" y="2.5" width="2" height="5" fill="#f2f2f2"/><rect x="5.5" y="8.6" width="2" height="2" fill="#f2f2f2"/></svg>
<svg style="left:301px;top:655px;" width="12" height="12" viewBox="0 0 12 12"><rect x="0" y="0" width="12" height="11" fill="#6e6e6e"/><path d="M2.5 2.5 L5 5 L2.5 7.5" fill="none" stroke="#f2f2f2" stroke-width="1.2"/><rect x="6" y="7.5" width="4" height="1.2" fill="#f2f2f2"/></svg>
<svg style="left:385px;top:653px;" width="12" height="15" viewBox="0 0 12 15"><circle cx="6" cy="4" r="3.5" fill="#6e6e6e"/><rect x="2" y="5" width="8" height="8" rx="1.5" fill="#6e6e6e"/><rect x="0" y="7" width="12" height="2" fill="#6e6e6e"/><rect x="1" y="12" width="10" height="2" fill="#6e6e6e"/></svg>
<svg style="left:502px;top:655px;" width="12" height="12" viewBox="0 0 12 12"><rect x="0" y="1" width="12" height="1.8" fill="#6e6e6e"/><rect x="0" y="5" width="8" height="1.8" fill="#6e6e6e"/><rect x="0" y="9" width="11" height="1.8" fill="#6e6e6e"/></svg>
<svg style="left:576px;top:653px;" width="13" height="14" viewBox="0 0 13 14"><path d="M3 1 H10 L12.5 4.5 L6.5 12.5 L0.5 4.5 Z M0.5 4.5 H12.5 M4 4.5 L6.5 12.5 L9 4.5 M3 1 L4 4.5 L6.5 1 L9 4.5 L10 1" fill="none" stroke="#6e6e6e" stroke-width="1"/></svg>
<svg style="left:721px;top:654px;" width="13" height="13" viewBox="0 0 13 13"><path d="M3.5 0.5 H9.5 L12.5 6.5 L9.5 12.5 H3.5 L0.5 6.5 Z" fill="#6e6e6e"/><path d="M5 3.5 L9 6.5 L5 9.5 Z" fill="#f2f2f2"/></svg>
<svg style="left:797px;top:653px;" width="14" height="14" viewBox="0 0 14 14"><path d="M1.5 4 L5.5 0.5 L8 3 L4 6.5 Z" fill="#5a5a5a"/><path d="M5.5 5 L12.5 12" stroke="#5a5a5a" stroke-width="2.2"/></svg>
<svg style="left:0px;top:675px;" width="13" height="14" viewBox="0 0 13 14"><rect x="3.5" y="1.5" width="9" height="9" fill="none" stroke="#6e6e6e"/><path d="M1.5 3.5 V12.5 H10.5" fill="none" stroke="#6e6e6e"/></svg>
<div class="t" style="left:21.3px;top:675.84px;font-size:12px;line-height:12px;font-family:'Liberation Sans', sans-serif;font-weight:400;color:#000;transform:scaleX(0.9671);transform-origin:0 0;">Gradle sync failed in 6 s 313 ms (2 minutes ago)</div>
<div class="t" style="left:1121.7px;top:675.84px;font-size:12px;line-height:12px;font-family:'Liberation Sans', sans-serif;font-weight:400;color:#000;transform:scaleX(0.8569);transform-origin:0 0;">1:1</div>
<div class="t" style="left:1148.3px;top:675.84px;font-size:12px;line-height:12px;font-family:'Liberation Sans', sans-serif;font-weight:400;color:#000;transform:scaleX(0.9061);transform-origin:0 0;">LF</div>
<div class="t" style="left:1172.3px;top:675.84px;font-size:12px;line-height:12px;font-family:'Liberation Sans', sans-serif;font-weight:400;color:#000;transform:scaleX(0.9265);transform-origin:0 0;">UTF-8</div>
<div class="t" style="left:1215px;top:675.84px;font-size:12px;line-height:12px;font-family:'Liberation Sans', sans-serif;font-weight:400;color:#000;transform:scaleX(0.9369);transform-origin:0 0;">4 spaces</div>
<svg style="left:1269px;top:676px;" width="13" height="13" viewBox="0 0 13 13"><path d="M3 6 V3.5 A2.5 2.5 0 0 1 8 3.5" fill="none" stroke="#6e6e6e" stroke-width="1.5"/><rect x="4.5" y="6" width="8" height="6.5" fill="#6e6e6e"/></svg>
<svg style="left:1294px;top:676px;" width="14" height="13" viewBox="0 0 14 13"><path d="M0.5 0.5 H13 V10 H11 V12.5 L8.5 10 H0.5 Z" fill="#6e6e6e"/><rect x="6" y="2" width="2" height="4.5" fill="#f2f2f2"/><rect x="6" y="7.3" width="2" height="1.8" fill="#f2f2f2"/></svg>
<div class="t" style="left:0.7px;top:94.5px;font-size:11.5px;line-height:11.5px;font-family:'Liberation Sans', sans-serif;color:#000;transform-origin:0 0;transform:rotate(-90deg) scaleX(0.9219) translateY(0px);">Project</div>
<svg style="left:0px;top:100px;" width="12" height="11" viewBox="0 0 12 11"><path d="M0 0 H5 L7 2 H11 V10 H0 Z" fill="#6e6e6e"/></svg>
<div class="t" style="left:0.7px;top:414px;font-size:11.5px;line-height:11.5px;font-family:'Liberation Sans', sans-serif;color:#000;transform-origin:0 0;transform:rotate(-90deg) scaleX(0.9320) translateY(0px);">Structure</div>
<svg style="left:1px;top:421px;" width="12" height="11" viewBox="0 0 12 11"><rect x="0" y="5" width="4" height="4" fill="#6e6e6e"/><rect x="5" y="5" width="4" height="4" fill="#6e6e6e"/><rect x="5" y="0" width="4" height="4" fill="#6e6e6e"/></svg>
<div class="t" style="left:0.7px;top:508.5px;font-size:11.5px;line-height:11.5px;font-family:'Liberation Sans', sans-serif;color:#000;transform-origin:0 0;transform:rotate(-90deg) scaleX(0.8865) translateY(0px);">Bookmarks</div>
<svg style="left:1px;top:514px;" width="10" height="12" viewBox="0 0 10 12"><path d="M0 0 H9 V11 L4.5 7.5 L0 11 Z" fill="#6e6e6e"/></svg>
<div class="t" style="left:0.7px;top:619.5px;font-size:11.5px;line-height:11.5px;font-family:'Liberation Sans', sans-serif;color:#000;transform-origin:0 0;transform:rotate(-90deg) scaleX(0.9556) translateY(0px);">Build Variants</div>
<svg style="left:0px;top:624px;" width="13" height="10" viewBox="0 0 13 10"><path d="M0.5 9.5 A5.5 5.5 0 0 1 11.5 9.5 Z" fill="#6e6e6e"/><path d="M1.5 1.5 L3.5 5 M10.5 1.5 L8.5 5" stroke="#6e6e6e" stroke-width="1.1"/></svg>
<svg style="left:1299px;top:63px;" width="13" height="12" viewBox="0 0 13 12"><rect x="3.5" y="0.5" width="9" height="8" fill="none" stroke="#6e6e6e"/><rect x="0.5" y="3.5" width="5" height="8" fill="#f2f2f2" stroke="#6e6e6e"/></svg>
<div class="t" style="left:1313.2px;top:80.3px;font-size:12px;line-height:12px;font-family:'Liberation Sans', sans-serif;color:#000;transform-origin:0 0;transform:rotate(90deg) scaleX(0.9236);">Device Manager</div>
<svg style="left:1299px;top:186px;" width="13" height="9" viewBox="0 0 13 9"><path d="M0 9 C0 4 3 1 7 2 C9 0 12 0 13 2 C12 5 11 8 10 9 Z" fill="#6e6e6e"/></svg>
<div class="t" style="left:1313.2px;top:201.5px;font-size:12px;line-height:12px;font-family:'Liberation Sans', sans-serif;color:#000;transform-origin:0 0;transform:rotate(90deg) scaleX(0.9214);">Gradle</div>
<svg style="left:1299px;top:285px;" width="13" height="12" viewBox="0 0 13 12"><path d="M2 9 V5 A4.5 4.5 0 0 1 11 5 V9 L12.5 10 H0.5 Z" fill="#6e6e6e"/><circle cx="12" cy="2" r="1.5" fill="#6e6e6e"/></svg>
<div class="t" style="left:1313.2px;top:302px;font-size:12px;line-height:12px;font-family:'Liberation Sans', sans-serif;color:#000;transform-origin:0 0;transform:rotate(90deg) scaleX(0.9331);">Notifications</div>
<svg style="left:1299px;top:392px;" width="13" height="13" viewBox="0 0 13 13"><rect x="0.5" y="3.5" width="9" height="8" fill="none" stroke="#6e6e6e"/><rect x="8" y="0.5" width="4" height="6" fill="#f2f2f2" stroke="#6e6e6e"/></svg>
<div class="t" style="left:1313.2px;top:408.7px;font-size:12px;line-height:12px;font-family:'Liberation Sans', sans-serif;color:#000;transform-origin:0 0;transform:rotate(90deg) scaleX(0.8962);">Running Devices</div>
<svg style="left:1299px;top:520px;" width="13" height="15" viewBox="0 0 13 15"><rect x="2.5" y="0.5" width="9" height="13" rx="1.5" fill="none" stroke="#6e6e6e" stroke-width="1.2"/><rect x="5" y="11" width="4" height="1" fill="#6e6e6e"/></svg>
<div class="t" style="left:1313.2px;top:537.7px;font-size:12px;line-height:12px;font-family:'Liberation Sans', sans-serif;color:#000;transform-origin:0 0;transform:rotate(90deg) scaleX(0.8931);">Device File Explorer</div>
<svg style="left:8px;top:3.5px;" width="12" height="8" viewBox="0 0 12 8"><path d="M0 8 A6.0 7 0 0 1 12 8 Z" fill="#3ddc84"/><path d="M2.5 0.5 L3.8 2.6 M9.5 0.5 L8.2 2.6" stroke="#3ddc84" stroke-width="1"/><circle cx="3.6" cy="5.4" r="0.7" fill="#fff"/><circle cx="8.4" cy="5.4" r="0.7" fill="#fff"/></svg>
<svg style="left:30px;top:60px;" width="12" height="8" viewBox="0 0 12 8"><path d="M0 8 A6.0 7 0 0 1 12 8 Z" fill="#3ddc84"/><path d="M2.5 0.5 L3.8 2.6 M9.5 0.5 L8.2 2.6" stroke="#3ddc84" stroke-width="1"/><circle cx="3.6" cy="5.4" r="0.7" fill="#fff"/><circle cx="8.4" cy="5.4" r="0.7" fill="#fff"/></svg>
<svg style="left:106px;top:62px;" width="10" height="6" viewBox="0 0 10 6"><path d="M0.5 0.5 H9.5 L5 5.5 Z" fill="#6e6e6e"/></svg>
<svg style="left:186px;top:57px;" width="15" height="15" viewBox="0 0 15 15"><circle cx="7.5" cy="7.5" r="6.2" fill="none" stroke="#6e6e6e" stroke-width="1.6"/><path d="M7.5 1.5 V5.5 M7.5 9.5 V13.5 M1.5 7.5 H5.5 M9.5 7.5 H13.5" stroke="#6e6e6e" stroke-width="1.8"/></svg>
<svg style="left:213px;top:57px;" width="13" height="14" viewBox="0 0 13 14"><rect x="0" y="0.5" width="12" height="1.6" fill="#6e6e6e"/><rect x="0" y="12" width="12" height="1.6" fill="#6e6e6e"/><path d="M3 5 L6 2.5 L9 5 Z M3 9 L6 11.5 L9 9 Z" fill="#6e6e6e"/><rect x="2" y="6.3" width="8" height="1.4" fill="#6e6e6e"/></svg>
<svg style="left:239px;top:57px;" width="13" height="14" viewBox="0 0 13 14"><rect x="0" y="6.2" width="12" height="1.6" fill="#6e6e6e"/><path d="M3 1 H9 L6 4.5 Z M3 13 H9 L6 9.5 Z" fill="#6e6e6e"/></svg>
<div style="left:261px;top:55px;width:1px;height:19px;background:#d9d9d9;"></div>
<svg style="left:268px;top:54px;" width="20" height="20" viewBox="0 0 20 20"><rect x="8.40" y="3.80" width="3.2" height="12.40" rx="0.6" fill="#6e6e6e" transform="rotate(0 10 10)"/><rect x="8.40" y="3.80" width="3.2" height="12.40" rx="0.6" fill="#6e6e6e" transform="rotate(60 10 10)"/><rect x="8.40" y="3.80" width="3.2" height="12.40" rx="0.6" fill="#6e6e6e" transform="rotate(120 10 10)"/><circle cx="10" cy="10" r="4.46" fill="#6e6e6e"/><circle cx="10" cy="10" r="2.05" fill="#f2f2f2"/></svg>
<div style="left:298px;top:63px;width:12px;height:1.5999999999999943px;background:#6e6e6e;"></div>
<svg style="left:95px;top:30px;" width="6" height="16" viewBox="0 0 6 16"><path d="M0.8 0.5 L4.8 8 L0.8 15.5" fill="none" stroke="#c8c8c8" stroke-width="1"/></svg>
<svg style="left:130.5px;top:30px;" width="6" height="16" viewBox="0 0 6 16"><path d="M0.8 0.5 L4.8 8 L0.8 15.5" fill="none" stroke="#c8c8c8" stroke-width="1"/></svg>
<svg style="left:163px;top:30px;" width="6" height="16" viewBox="0 0 6 16"><path d="M0.8 0.5 L4.8 8 L0.8 15.5" fill="none" stroke="#c8c8c8" stroke-width="1"/></svg>
<svg style="left:204px;top:30px;" width="6" height="16" viewBox="0 0 6 16"><path d="M0.8 0.5 L4.8 8 L0.8 15.5" fill="none" stroke="#c8c8c8" stroke-width="1"/></svg>
<svg style="left:240px;top:30px;" width="6" height="16" viewBox="0 0 6 16"><path d="M0.8 0.5 L4.8 8 L0.8 15.5" fill="none" stroke="#c8c8c8" stroke-width="1"/></svg>
<svg style="left:282.5px;top:30px;" width="6" height="16" viewBox="0 0 6 16"><path d="M0.8 0.5 L4.8 8 L0.8 15.5" fill="none" stroke="#c8c8c8" stroke-width="1"/></svg>
<svg style="left:343px;top:30px;" width="6" height="16" viewBox="0 0 6 16"><path d="M0.8 0.5 L4.8 8 L0.8 15.5" fill="none" stroke="#c8c8c8" stroke-width="1"/></svg>
<svg style="left:434px;top:30px;" width="6" height="16" viewBox="0 0 6 16"><path d="M0.8 0.5 L4.8 8 L0.8 15.5" fill="none" stroke="#c8c8c8" stroke-width="1"/></svg>
<svg style="left:446px;top:29px;" width="16" height="16" viewBox="0 0 16 16"><circle cx="7" cy="8" r="6.5" fill="#86cde0"/><path d="M9.2 5.3 A3 3 0 1 0 9.2 10.7" fill="none" stroke="#234" stroke-width="1.3"/><path d="M7 8 H15 L11.5 11.5 L15 15 H7 Z" fill="#b99bf8"/></svg>
<svg style="left:669px;top:28px;" width="17" height="15" viewBox="0 0 17 15"><path d="M1.5 5 L6.5 0.8 L9.5 3.5 L4.5 7.8 Z" fill="#59a869"/><path d="M6.5 6 L14.5 14" stroke="#59a869" stroke-width="2.6"/></svg>
<div style="left:697px;top:25px;width:127px;height:22px;background:#ffffff;box-sizing:border-box;border:1px solid #c9c9c9;border-radius:3px;"></div>
<div class="t" style="left:706px;top:30.84px;font-size:12px;line-height:12px;font-family:'Liberation Sans', sans-serif;font-weight:400;color:#000;transform:scaleX(1.0228);transform-origin:0 0;">Add Configuration...</div>
<div style="left:830px;top:25px;width:94px;height:22px;background:transparent;box-sizing:border-box;border:1px solid #d9d9d9;border-radius:3px;"></div>
<div class="t" style="left:839px;top:30.84px;font-size:12px;line-height:12px;font-family:'Liberation Sans', sans-serif;font-weight:400;color:#8c8c8c;transform:scaleX(0.9713);transform-origin:0 0;">No Devices</div>
<svg style="left:905px;top:33px;" width="10" height="6" viewBox="0 0 10 6"><path d="M0.5 0.5 H9.5 L5 5.5 Z" fill="#9a9a9a"/></svg>
<svg style="left:936px;top:30px;" width="11" height="12" viewBox="0 0 11 12"><path d="M0.5 0.5 L10.5 6 L0.5 11.5 Z" fill="#b8b8b8"/></svg>
<svg style="left:959px;top:29px;" width="14" height="14" viewBox="0 0 14 14"><path d="M11 5 A5 5 0 1 0 6 12" fill="none" stroke="#b8b8b8" stroke-width="1.8"/><path d="M8 1 L12 5.5 L7 6.5 Z" fill="#b8b8b8"/><text x="7" y="14" font-family="Liberation Sans" font-size="7" fill="#b8b8b8">A</text></svg>
<svg style="left:986px;top:30px;" width="15" height="14" viewBox="0 0 15 14"><rect x="0" y="0" width="13" height="1.8" fill="#b8b8b8"/><rect x="0" y="3.5" width="13" height="1.8" fill="#b8b8b8"/><rect x="0" y="7" width="9" height="1.8" fill="#b8b8b8"/><rect x="0" y="10.5" width="7" height="1.8" fill="#b8b8b8"/><path d="M10 8 A2.5 2.5 0 0 1 10 13" fill="none" stroke="#b8b8b8" stroke-width="1.3"/></svg>
<svg style="left:1012.5px;top:29px;" width="13" height="14" viewBox="0 0 13 14"><ellipse cx="6.5" cy="8.5" rx="4.5" ry="5" fill="#b8b8b8"/><circle cx="6.5" cy="3.5" r="2.5" fill="#b8b8b8"/><path d="M2.5 1 L4 3 M10.5 1 L9 3 M0 6.5 H13 M0 10 H13" stroke="#b8b8b8" stroke-width="1.3"/><rect x="6" y="5" width="1" height="8" fill="#f2f2f2"/></svg>
<svg style="left:1037px;top:29px;" width="17" height="16" viewBox="0 0 17 16"><path d="M0 1 H7 A5 5 0 0 1 7 11 H4 V13 H0 Z" fill="#b8b8b8"/><path d="M8 7 L16 11.5 L8 16 Z" fill="#b8b8b8" stroke="#f2f2f2" stroke-width="1"/></svg>
<svg style="left:1062px;top:31px;" width="14" height="9" viewBox="0 0 14 9"><path d="M1 9 A6 6 0 0 1 13 9" fill="none" stroke="#b8b8b8" stroke-width="2"/><path d="M6 8.5 L8.5 3.5" stroke="#b8b8b8" stroke-width="1.8"/></svg>
<svg style="left:1083.5px;top:34px;" width="9" height="6" viewBox="0 0 9 6"><path d="M0 0 H8 L4 5 Z" fill="#6e6e6e"/></svg>
<svg style="left:1101px;top:29px;" width="13" height="14" viewBox="0 0 13 14"><ellipse cx="6.5" cy="8.5" rx="4.5" ry="5" fill="#59a869"/><circle cx="6.5" cy="3.5" r="2.5" fill="#59a869"/><path d="M2.5 1 L4 3 M10.5 1 L9 3 M0 6.5 H13 M0 10 H13" stroke="#59a869" stroke-width="1.3"/><rect x="6" y="5" width="1" height="8" fill="#f2f2f2"/></svg>
<svg style="left:1107px;top:36px;" width="10" height="10" viewBox="0 0 10 10"><path d="M1.5 8.5 L8 2" stroke="#505050" stroke-width="1.8"/><path d="M3 1 H9 V7 Z" fill="#505050"/></svg>
<div style="left:1128.4px;top:30.5px;width:10.599999999999909px;height:10.5px;background:#b8b8b8;"></div>
<div style="left:1150px;top:28px;width:1px;height:17px;background:#d0d0d0;"></div>
<svg style="left:1159px;top:29px;" width="17" height="15" viewBox="0 0 17 15"><path d="M0 12 C0 6 3 4 7 4.5 L10 4.5 C10.5 2 13 1 15 2 C15.5 4 14 5 13 6 C13 8 12 10 11 11 H9.5 L9 10 C8 10.2 6 10.2 5 10 L4 12 Z" fill="#5a5a5a"/><path d="M8 13.5 L14 7.5" stroke="#3592c4" stroke-width="2"/><path d="M7 8 V14.5 H13.5 Z" fill="#3592c4"/></svg>
<svg style="left:1187px;top:29px;" width="15" height="15" viewBox="0 0 15 15"><rect x="0.8" y="0.8" width="8" height="12" rx="1" fill="none" stroke="#5a5a5a" stroke-width="1.6"/><path d="M5 15 A5 5 0 0 1 15 15 Z" fill="#3ddc84"/></svg>
<svg style="left:1211px;top:29px;" width="17" height="16" viewBox="0 0 17 16"><path d="M5.5 0 L11 2.5 V8.5 L5.5 11 L0 8.5 V2.5 Z" fill="#5a5a5a"/><path d="M0 2.5 L5.5 5 L11 2.5 M5.5 5 V11" stroke="#f2f2f2" stroke-width="0.8" fill="none"/><path d="M12.5 6 V14" stroke="#3592c4" stroke-width="1.8"/><path d="M9.5 11 L12.5 15 L15.5 11 Z" fill="#3592c4"/></svg>
<div style="left:1235px;top:28px;width:1px;height:17px;background:#d0d0d0;"></div>
<svg style="left:1244px;top:29px;" width="16" height="16" viewBox="0 0 16 16"><circle cx="6.5" cy="6.5" r="5" fill="none" stroke="#5a5a5a" stroke-width="2"/><path d="M10 10 L15 15" stroke="#5a5a5a" stroke-width="2.4"/></svg>
<svg style="left:1268px;top:26px;" width="20" height="20" viewBox="0 0 20 20"><rect x="8.40" y="3.60" width="3.2" height="12.80" rx="0.6" fill="#5a5a5a" transform="rotate(0 10 10)"/><rect x="8.40" y="3.60" width="3.2" height="12.80" rx="0.6" fill="#5a5a5a" transform="rotate(60 10 10)"/><rect x="8.40" y="3.60" width="3.2" height="12.80" rx="0.6" fill="#5a5a5a" transform="rotate(120 10 10)"/><circle cx="10" cy="10" r="4.61" fill="#5a5a5a"/><circle cx="10" cy="10" r="2.11" fill="#f2f2f2"/></svg>
<div style="left:1296px;top:28px;width:16px;height:16px;background:#c4c4c4;"></div>
<svg style="left:1296px;top:28px;" width="16" height="16" viewBox="0 0 16 16"><circle cx="8" cy="5.5" r="3" fill="#fafafa"/><rect x="3" y="10" width="10" height="6" rx="1.5" fill="#fafafa"/></svg>
<div style="left:1196px;top:8px;width:10px;height:1px;background:#8a8a8a;"></div>
<div style="left:1242px;top:2px;width:11px;height:10px;background:transparent;box-sizing:border-box;border:1px solid #8a8a8a;"></div>
<svg style="left:1289px;top:1px;" width="12" height="12" viewBox="0 0 12 12"><path d="M0.5 0.5 L11 11 M11 0.5 L0.5 11" stroke="#8a8a8a" stroke-width="1"/></svg>
</body></html>
